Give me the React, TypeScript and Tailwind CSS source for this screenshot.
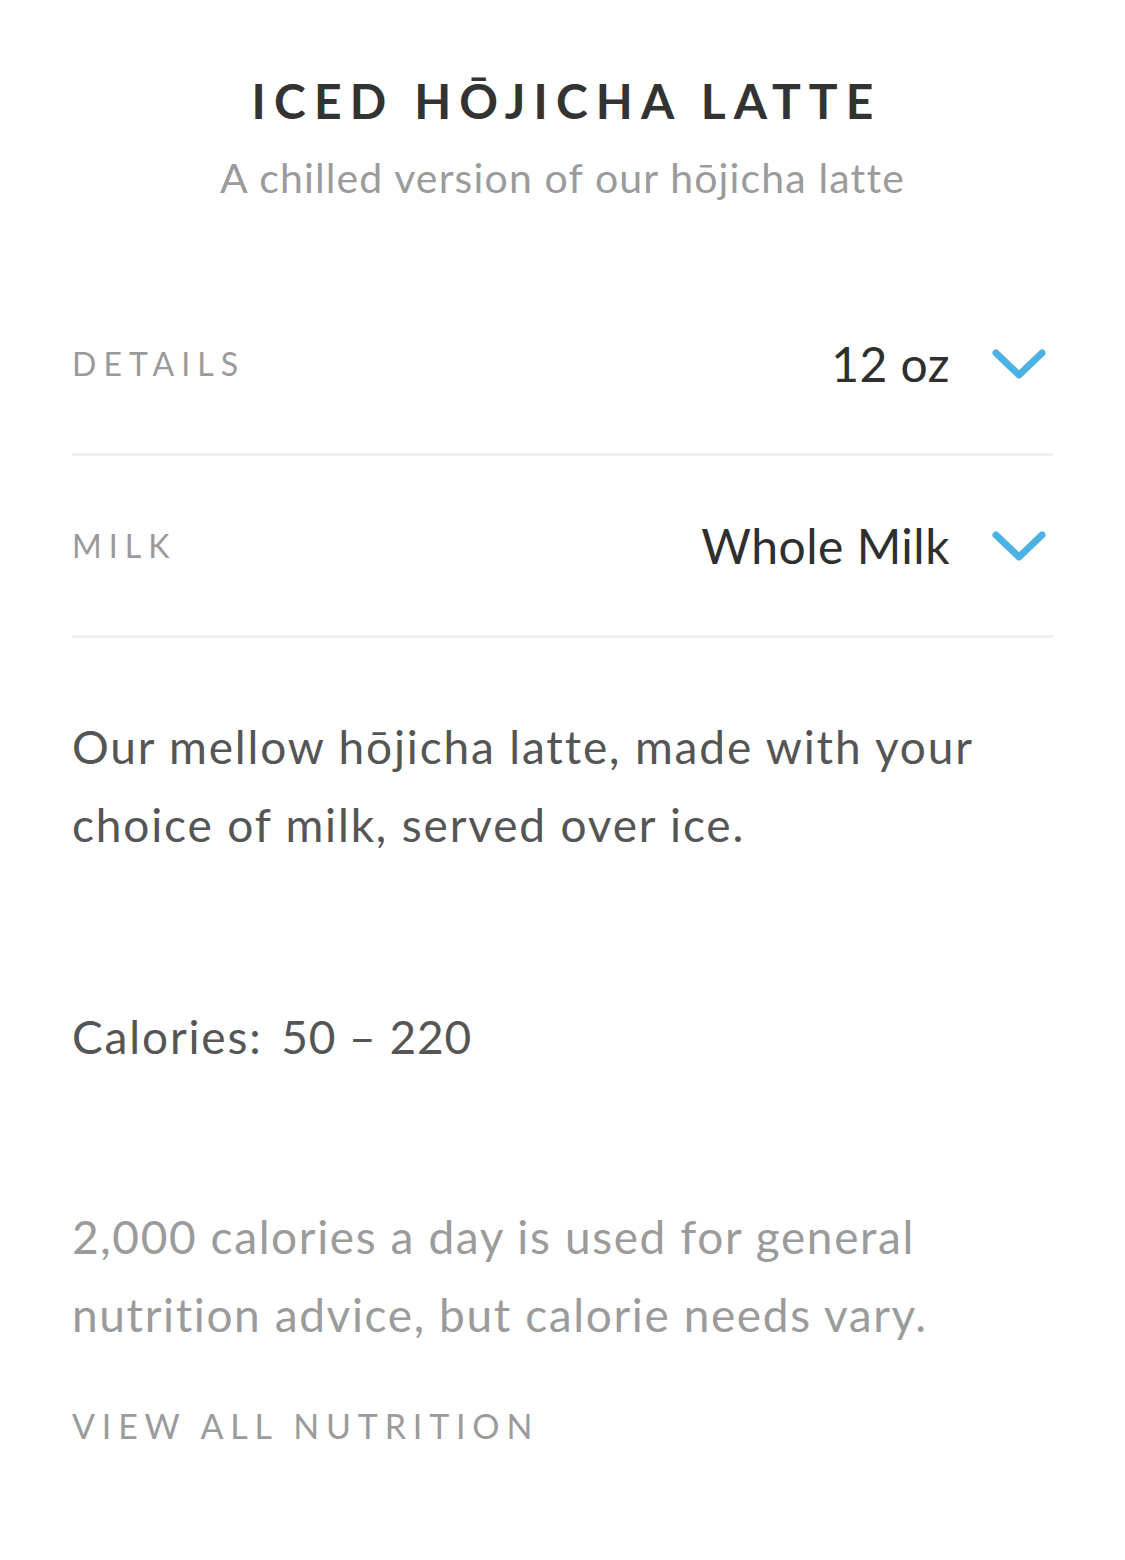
import React from "react";

function Chevron() {
  return (
    <svg width="54" height="32" viewBox="0 0 54 32" className="shrink-0">
      <path d="M4 5 L27 27 L50 5" fill="none" stroke="#4cb2e2" strokeWidth="7" strokeLinecap="round" strokeLinejoin="round" />
    </svg>
  );
}

function Row({ label, value }: { label: string; value: string }) {
  return (
    <div className="flex h-[182px] items-center justify-between border-b-[3px] border-[#efefef]">
      <span className="text-[32px] tracking-[0.22em] text-[#9a9a9a]">{label}</span>
      <div className="flex items-center gap-[42px] pr-[7px]">
        <span className="text-[48px] tracking-[0.01em] text-[#2f2f2f]">{value}</span>
        <Chevron />
      </div>
    </div>
  );
}

export default function App() {
  return (
    <div className="min-h-[1560px] w-[1125px] bg-white" style={{ fontFamily: "Lato, 'Noto Sans', sans-serif" }}>
      <div className="flex flex-col items-center pt-[68px]">
        <h1 className="pl-[0.17em] text-[48px] font-bold leading-[66px] tracking-[0.17em] text-[#333]">ICED HŌJICHA LATTE</h1>
        <p className="mt-[16px] text-[41px] leading-[56px] tracking-[0.028em] text-[#9b9b9b]">A chilled version of our hōjicha latte</p>
      </div>
      <div className="mt-[68px] px-[72px]">
        <Row label="DETAILS" value="12 oz" />
        <Row label="MILK" value="Whole Milk" />
        <p className="mt-[70px] max-w-[930px] text-[46px] leading-[78px] tracking-[0.04em] text-[#555]">
          Our mellow hōjicha latte, made with your choice of milk, served over ice.
        </p>
        <p className="mt-[134px] text-[46px] leading-[78px] tracking-[0.04em] text-[#555]">
          Calories: <span className="ml-[5px] tracking-[0.02em]">50 – 220</span>
        </p>
        <p className="mt-[122px] max-w-[900px] text-[46px] leading-[78px] tracking-[0.035em] text-[#9b9b9b]">
          2,000 calories a day is used for general nutrition advice, but calorie needs vary.
        </p>
        <p className="mt-[46px] text-[34px] tracking-[0.2em] text-[#9b9b9b]">VIEW ALL NUTRITION</p>
      </div>
    </div>
  );
}
